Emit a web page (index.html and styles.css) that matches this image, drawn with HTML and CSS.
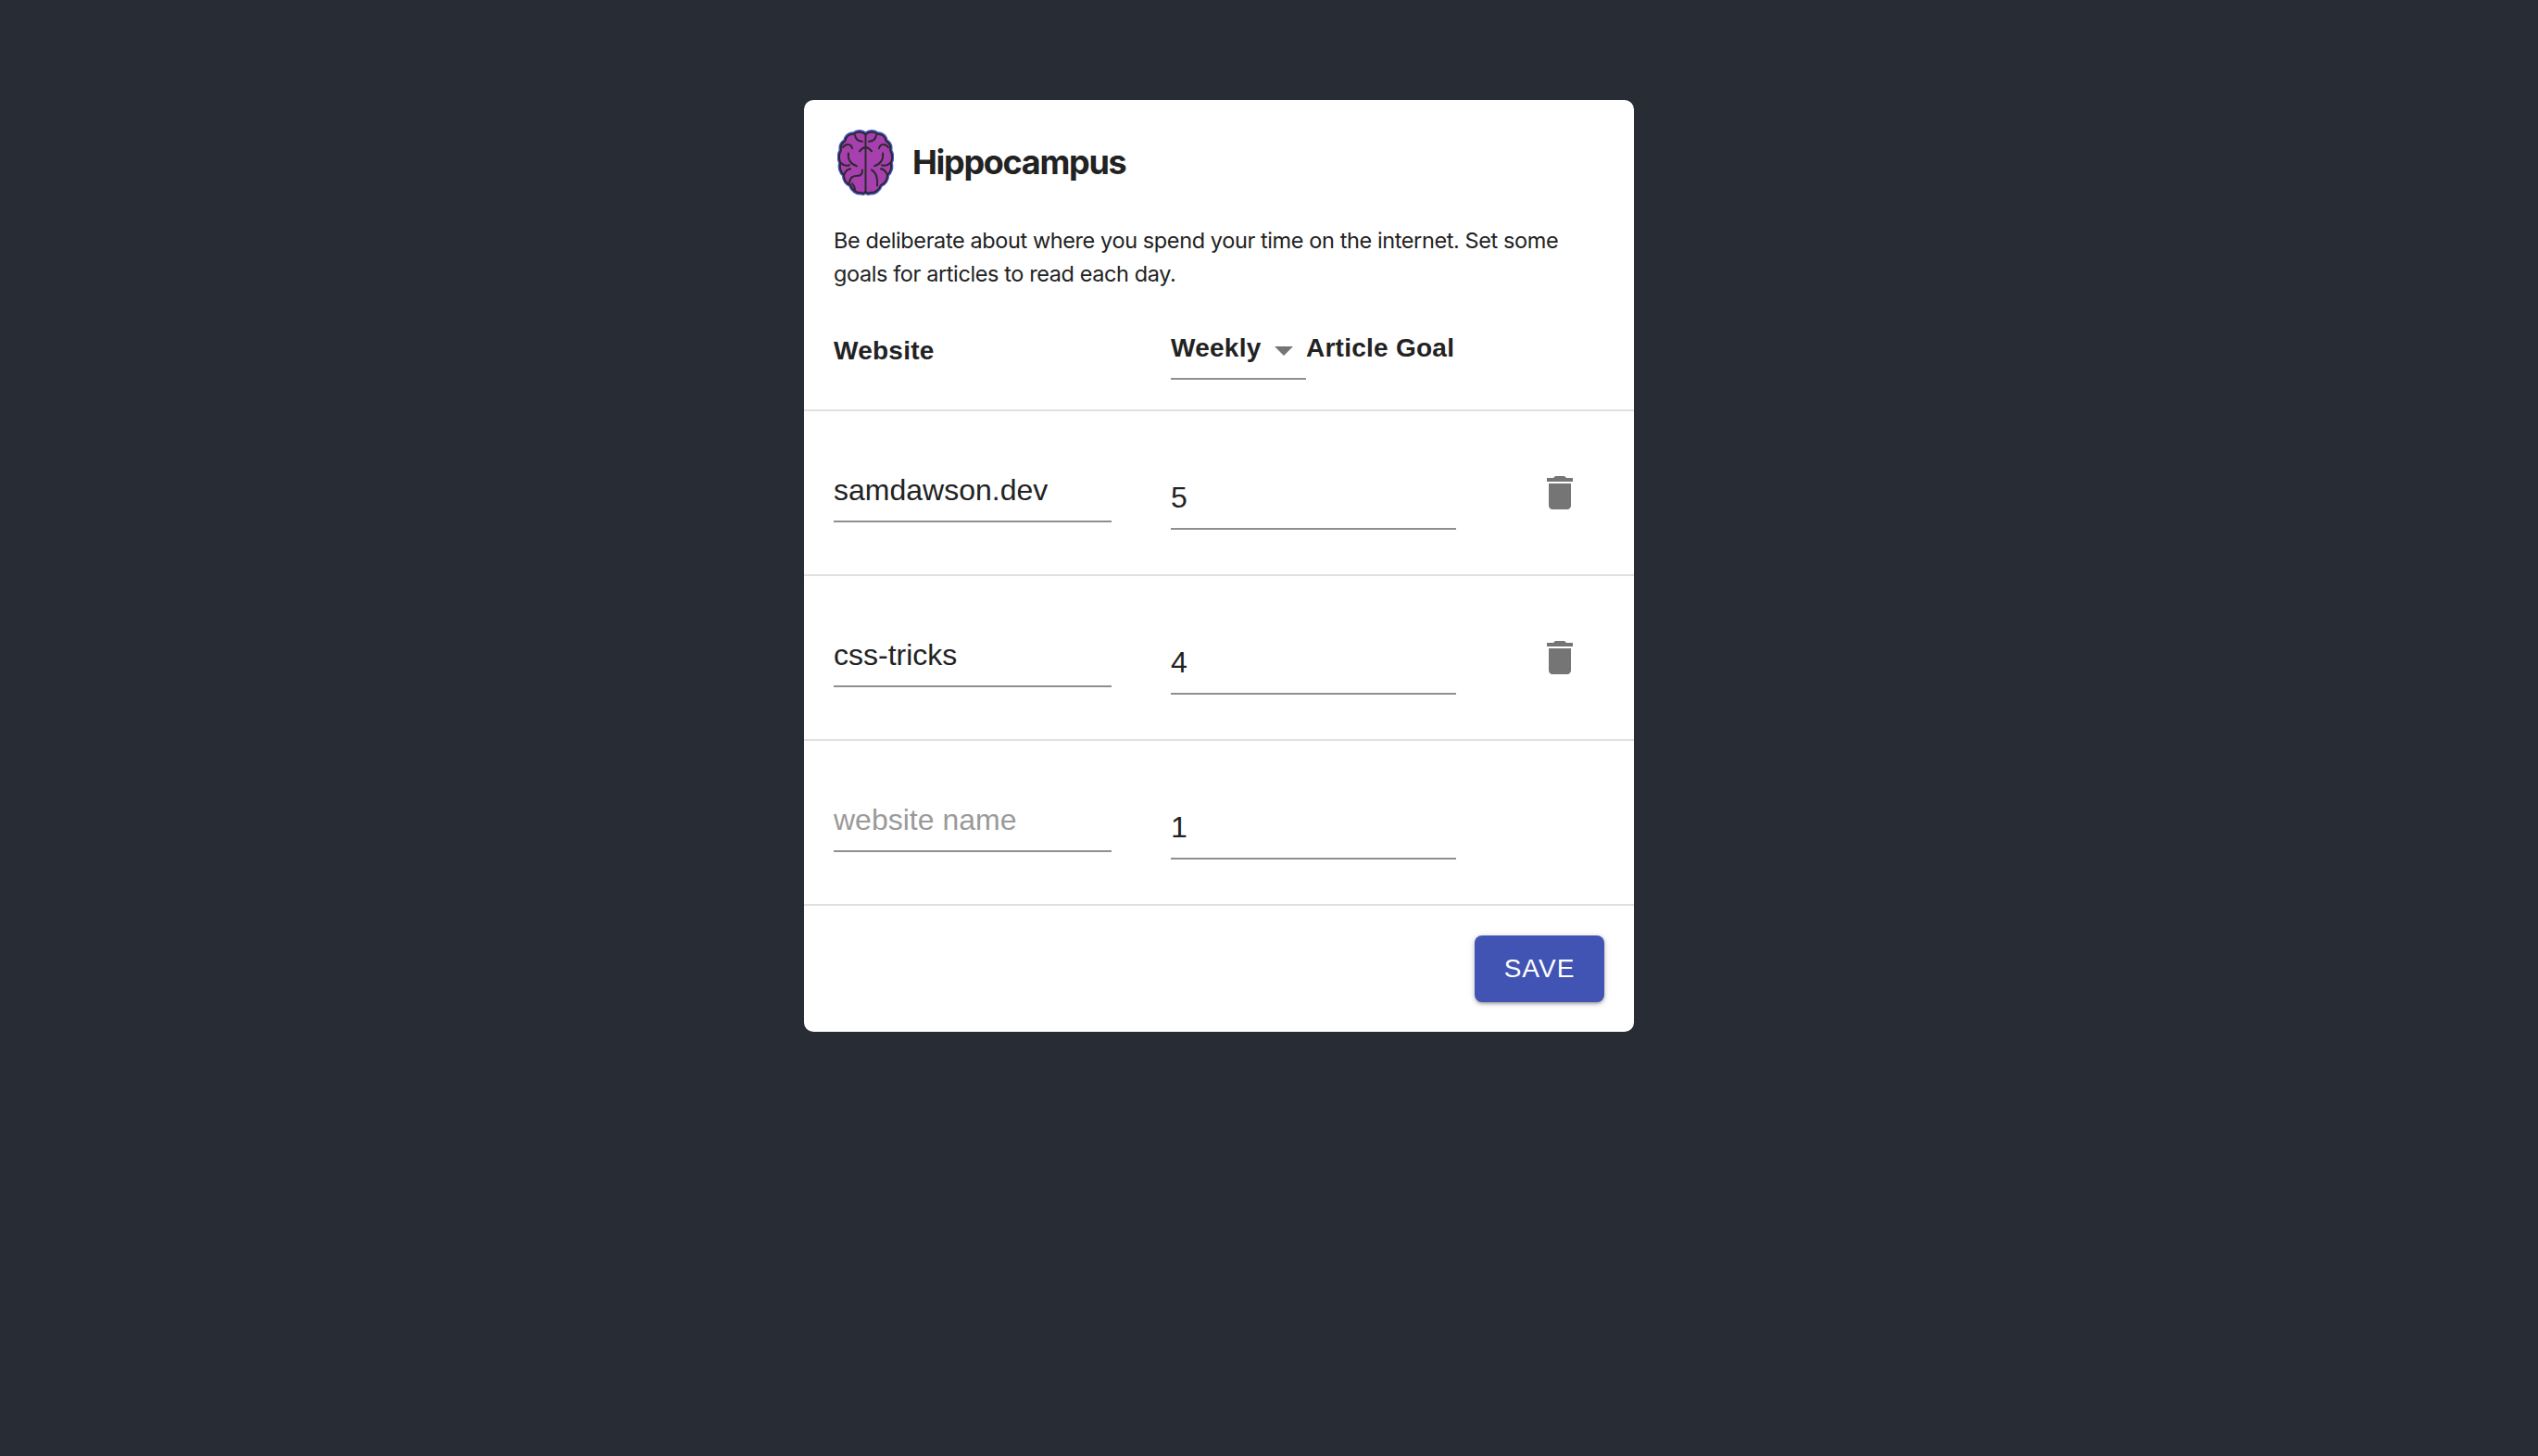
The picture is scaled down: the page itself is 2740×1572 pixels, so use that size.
FILE: index.html
```html
<!DOCTYPE html>
<html lang="en">
<head>
<meta charset="utf-8">
<title>Hippocampus</title>
<link rel="stylesheet" href="styles.css">
</head>
<body>
<main class="card">
  <header class="brand">
    <svg class="logo" viewBox="0 1 61 67" preserveAspectRatio="none" aria-hidden="true">
      <path class="brain-halo" d="M30.500 6C27 2.500 21 2.500 18 5.500C13 5 9 8 8.500 12.500C5 14.500 3 18 4 22C1.500 26 1.500 31 3.500 35C2 39.500 3.500 44.500 7 47C7 52 10 56 14 57.500C16 62.500 21 66 25 65C27.500 66.500 29.500 65.500 30.500 64C31.500 65.500 33.500 66.500 36 65C40 66 45 62.500 47 57.500C51 56 54 52 54 47C57.500 44.500 59 39.500 57.500 35C59.500 31 59.500 26 57 22C58 18 56 14.500 52.500 12.500C52 8 48 5 43 5.500C40 2.500 34 2.500 30.500 6Z"/>
      <path class="brain" d="M30.500 6C27 2.500 21 2.500 18 5.500C13 5 9 8 8.500 12.500C5 14.500 3 18 4 22C1.500 26 1.500 31 3.500 35C2 39.500 3.500 44.500 7 47C7 52 10 56 14 57.500C16 62.500 21 66 25 65C27.500 66.500 29.500 65.500 30.500 64C31.500 65.500 33.500 66.500 36 65C40 66 45 62.500 47 57.500C51 56 54 52 54 47C57.500 44.500 59 39.500 57.500 35C59.500 31 59.500 26 57 22C58 18 56 14.500 52.500 12.500C52 8 48 5 43 5.500C40 2.500 34 2.500 30.500 6Z"/>
      <path class="fold" d="M30.500 6V64M19 7C20 11 23 13 27 13M30 19C27 19 26 21 24 23M6 19C9 15 15 15 16 20M12 25C11 31 14 36 21 38M4 35C7 38 10 38 13 37M7 47C9 43 11 41 14 41M13 55C14 49 17 48 22 48C25 48 27 46 27 42M16 56C18 58 19 60 19 62M42 7C41 11 38 13 34 13M31 19C34 19 35 21 37 23M55 19C52 15 46 15 45 20M49 25C50 31 47 36 40 38M57 35C54 38 51 38 48 37M54 47C52 43 50 41 47 41M37 42C41 44 44 48 43 58"/>
    </svg>
    <h1 class="title">Hippocampus</h1>
  </header>
  <p class="intro">Be deliberate about where you spend your time on the internet. Set some goals for articles to read each day.</p>
  <div class="row head">
    <div class="col-site head-label">Website</div>
    <div class="col-goal head-goal">
      <div class="select"><span class="head-label">Weekly</span><svg class="caret" viewBox="0 0 20 10" aria-hidden="true"><path d="M0 0H20L10 10Z"/></svg></div>
      <span class="head-label">Article Goal</span>
    </div>
  </div>
  <div class="row item">
    <div class="col-site"><div class="field site-field">samdawson.dev</div></div>
    <div class="col-goal"><div class="field goal-field">5</div></div>
    <svg class="trash" viewBox="0 0 24 24" aria-hidden="true"><path d="M6 19c0 1.100.9 2 2 2h8c1.100 0 2-.9 2-2V7H6v12zM19 4h-3.500l-1-1h-5l-1 1H5v2h14V4z"/></svg>
  </div>
  <div class="row item">
    <div class="col-site"><div class="field site-field">css-tricks</div></div>
    <div class="col-goal"><div class="field goal-field">4</div></div>
    <svg class="trash" viewBox="0 0 24 24" aria-hidden="true"><path d="M6 19c0 1.100.9 2 2 2h8c1.100 0 2-.9 2-2V7H6v12zM19 4h-3.500l-1-1h-5l-1 1H5v2h14V4z"/></svg>
  </div>
  <div class="row item">
    <div class="col-site"><div class="field site-field placeholder">website name</div></div>
    <div class="col-goal"><div class="field goal-field">1</div></div>
  </div>
  <footer class="actions"><button class="save" type="button">SAVE</button></footer>
</main>
</body>
</html>
```
FILE: styles.css
```css
* { box-sizing: border-box; }
html, body { margin: 0; height: 100%; }
body {
  background: #282c34;
  font-family: "Liberation Sans", Arial, sans-serif;
  color: #1a1a1a;
  padding: 108px 0 0 868px;
}
.card {
  width: 896px;
  height: 1006px;
  background: #fff;
  border-radius: 10px;
  display: flex;
  flex-direction: column;
}
.brand { display: flex; align-items: center; gap: 20px; padding: 30px 32px 0 36px; height: 104px; }
.logo { width: 61px; height: 71px; flex: none; }
.brain-halo { fill: none; stroke: #4a55c9; stroke-width: 4.500; }
.brain { fill: #a83fae; stroke: #2b2a30; stroke-width: 2; stroke-linejoin: round; }
.fold { fill: none; stroke: #2b2a30; stroke-width: 2; stroke-linecap: round; }
.title { margin: 0; font-family: Inter, "Liberation Sans", sans-serif; font-size: 36px; font-weight: 700; letter-spacing: -1.3px; color: #222; }
.intro { margin: 30px 32px 0; font-family: Inter, "Liberation Sans", sans-serif; font-size: 23.500px; letter-spacing: -0.4px; line-height: 36px; color: #222; }
.row { display: flex; border-bottom: 2px solid #e0e0e0; padding-left: 32px; }
.head { height: 130px; padding-top: 36px; align-items: flex-start; }
.col-site { width: 364px; flex: none; }
.col-goal { flex: none; width: 308px; }
.head-label { font-size: 28px; font-weight: 700; letter-spacing: .25px; color: #222; }
.col-site.head-label { padding-top: 13px; }
.head-goal { display: flex; width: auto; }
.select { width: 146px; height: 60px; border-bottom: 2px solid #8f8f8f; display: flex; align-items: flex-start; padding-top: 10px; }
.select .head-label { width: 112px; }
.caret { width: 20px; height: 10px; fill: #757575; margin-top: 14px; }
.head-goal > .head-label { padding-top: 10px; }
.item { height: 178px; }
.field { font-size: 32px; line-height: 40px; border-bottom: 2px solid #8f8f8f; color: #222; }
.site-field { width: 300px; margin-top: 64px; height: 56px; padding-top: 1px; }
.goal-field { width: 308px; margin-top: 71px; height: 57px; padding-top: 2px; }
.placeholder { color: #9a9a9a; }
.trash { width: 48px; height: 48px; margin: 64px 0 0 88px; fill: #757575; flex: none; }
.actions { display: flex; justify-content: flex-end; padding: 32px; }
.save {
  width: 140px; height: 72px;
  background: #4154b3; color: #fff; border: 0; border-radius: 8px;
  font: 500 28px "Liberation Sans", Arial, sans-serif;
  letter-spacing: 1px;
  box-shadow: 0 3px 3px -2px rgba(0,0,0,.2), 0 2px 4px rgba(0,0,0,.2), 0 1px 8px rgba(0,0,0,.12);
}
```
